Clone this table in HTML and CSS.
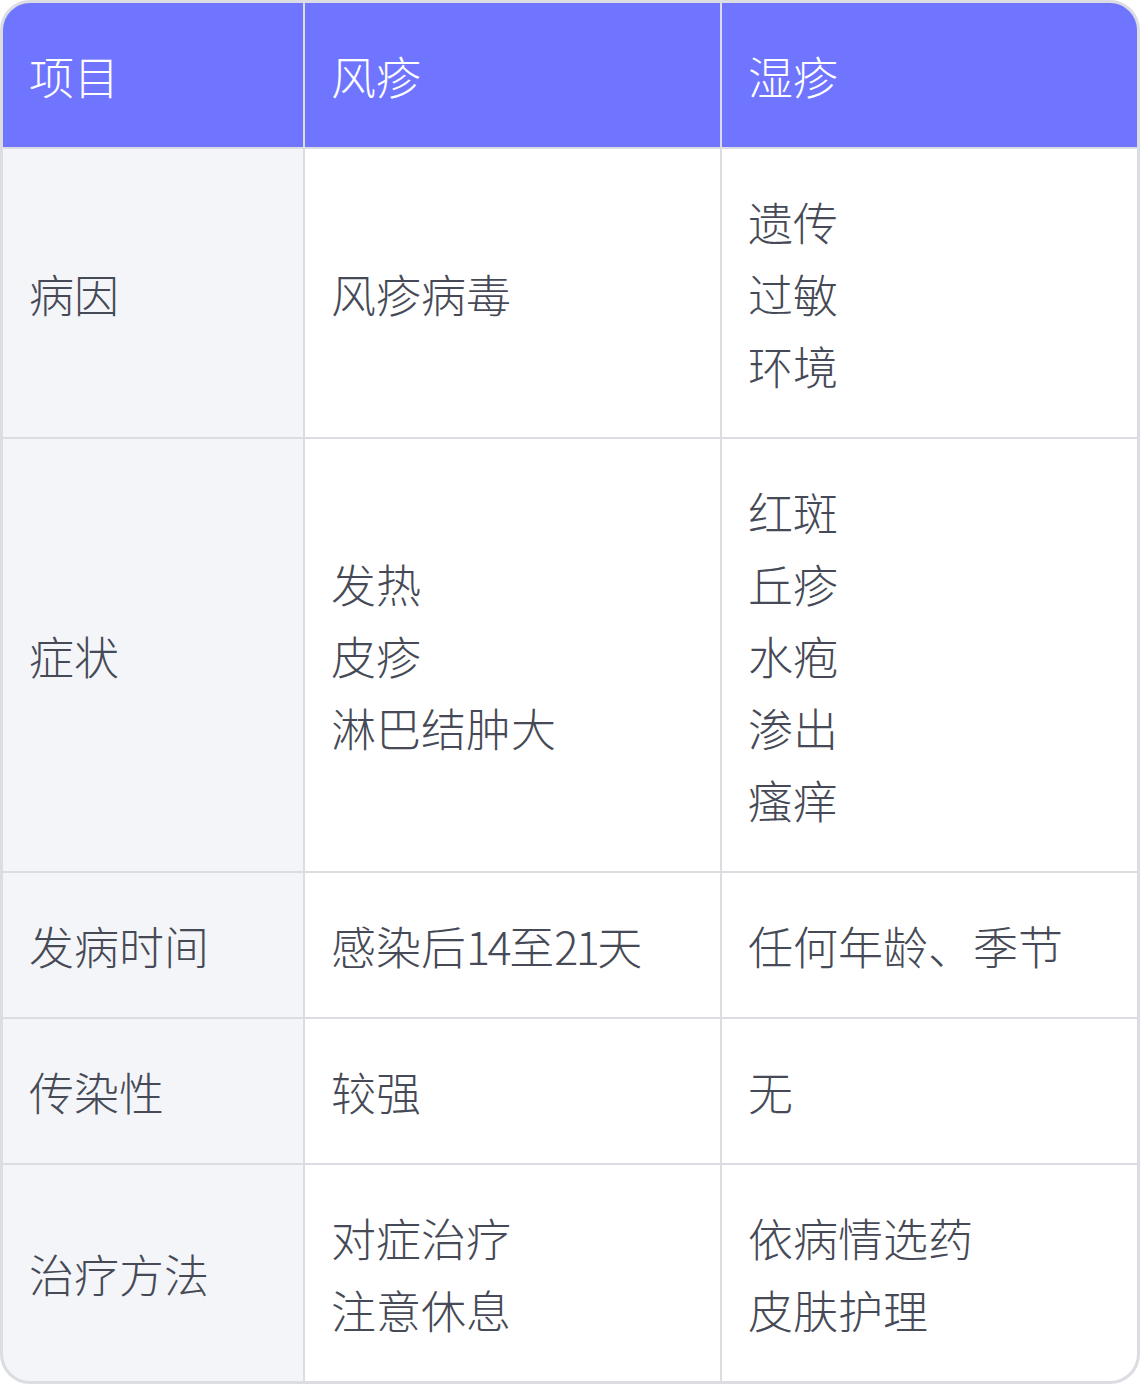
FILE: index.html
```html
<!DOCTYPE html>
<html lang="zh-CN">
<head>
<meta charset="utf-8">
<link rel="stylesheet" href="styles.css">
<title>风疹与湿疹对比</title>
</head>
<body>
<div class="table">
  <div class="cell head">项目</div>
  <div class="cell head">风疹</div>
  <div class="cell head">湿疹</div>

  <div class="cell label">病因</div>
  <div class="cell">风疹病毒</div>
  <div class="cell">遗传<br>过敏<br>环境</div>

  <div class="cell label">症状</div>
  <div class="cell">发热<br>皮疹<br>淋巴结肿大</div>
  <div class="cell">红斑<br>丘疹<br>水疱<br>渗出<br>瘙痒</div>

  <div class="cell label">发病时间</div>
  <div class="cell"><span>感染后<span class="num">14</span>至<span class="num">21</span>天</span></div>
  <div class="cell">任何年龄、季节</div>

  <div class="cell label">传染性</div>
  <div class="cell">较强</div>
  <div class="cell">无</div>

  <div class="cell label">治疗方法</div>
  <div class="cell">对症治疗<br>注意休息</div>
  <div class="cell">依病情选药<br>皮肤护理</div>
</div>
</body>
</html>
```

FILE: styles.css
```css
html, body {
  margin: 0;
  padding: 0;
  background: #ffffff;
}

.table {
  box-sizing: border-box;
  width: 1140px;
  height: 1384px;
  border: 3px solid #dcdde2;
  border-radius: 30px;
  overflow: hidden;
  background: #dcdde2;
  display: grid;
  grid-template-columns: 300px 1fr 1fr;
  grid-template-rows: 144px 288px 432px 144px 144px 216px;
  gap: 2px;
  font-family: "Noto Sans CJK SC", "Noto Sans", sans-serif;
  font-size: 45px;
  font-weight: 300;
  line-height: 72px;
  color: #464a56;
}

.cell {
  background: #ffffff;
  padding: 2px 26px 0;
  display: flex;
  flex-direction: column;
  justify-content: center;
}

.cell.head {
  background: #6f75ff;
  color: #ffffff;
}

.cell.label {
  background: #f4f5f9;
}

.num {
  letter-spacing: -2.5px;
}
```
